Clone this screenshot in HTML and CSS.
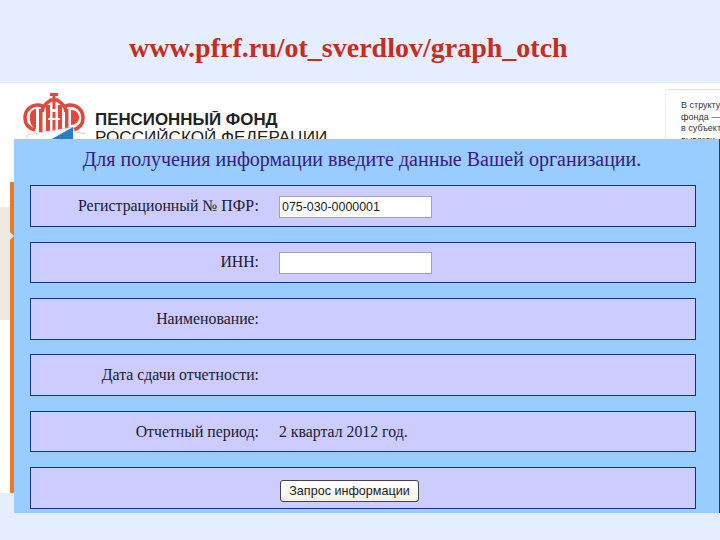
FILE: index.html
```html
<!DOCTYPE html>
<html lang="ru">
<head>
<meta charset="utf-8">
<title>www.pfrf.ru/ot_sverdlov/graph_otch</title>
<link rel="stylesheet" href="styles.css">
</head>
<body>
<header class="slide-title"><h1>www.pfrf.ru/ot_sverdlov/graph_otch</h1></header>
<section class="shot">
  <div class="site-head">
    <svg class="logo" viewBox="0 0 62 48" aria-hidden="true">
      <g fill="none" stroke="#e0483c" stroke-width="3.600">
        <path d="M12 38C5 36 2 31 2 26 2 18 8 13 15 13c3 0 5 1 6 3"/>
        <path d="M50 38c7-2 10-7 10-12 0-8-6-13-13-13-3 0-5 1-6 3"/>
        <path d="M19 20c0-7 6-10 9-12h6c3 2 9 5 9 12"/>
      </g>
      <g fill="#e0483c">
        <path d="M27 1h8v3h-2.500v5h-3V4H27z"/>
        <path d="M7 22c1-3 4-5 6-5v20c-3-1-7-5-6-15z"/>
        <rect x="16" y="17" width="3.500" height="23"/>
        <rect x="23" y="13" width="4" height="26"/>
        <rect x="29.500" y="9" width="3" height="30"/>
        <rect x="35" y="13" width="4" height="26"/>
        <rect x="42" y="17" width="3.500" height="21"/>
        <path d="M48 18c5 0 8 3 8 8 0 4-4 7-8 7z"/>
      </g>
      <path fill="#fff" d="M29 17h4v3h-4zM25 26h12v2H25z"/>
      <path fill="#fff" stroke="#b4c2d2" stroke-width=".7" d="M4 43l46-8 2 5 12 2v6H4z"/>
      <path fill="#2b7cc6" d="M27 48l23-13v13z"/>
    </svg>
    <div class="org"><span class="org-a">ПЕНСИОННЫЙ ФОНД</span><span class="org-b">РОССИЙСКОЙ ФЕДЕРАЦИИ</span></div>
    <div class="note">В структу<br>фонда —<br>в субъект<br>вывезти</div>
  </div>
  <div class="side-row">
    <div class="tab"></div>
    <div class="rule"></div>
  </div>
</section>
<main class="panel">
  <h2>Для получения информации введите данные Вашей организации.</h2>
  <div class="row"><span class="label">Регистрационный № ПФР:</span><input class="field" type="text" value="075-030-0000001"></div>
  <div class="row"><span class="label">ИНН:</span><input class="field" type="text"></div>
  <div class="row"><span class="label">Наименование:</span></div>
  <div class="row"><span class="label">Дата сдачи отчетности:</span></div>
  <div class="row"><span class="label">Отчетный период:</span><span class="value">2 квартал 2012 год.</span></div>
  <div class="row"><span class="label"></span><button class="submit" type="button">Запрос информации</button></div>
</main>
</body>
</html>
```
FILE: styles.css
```css
* { box-sizing: border-box; }
html, body { margin: 0; padding: 0; }
body {
  width: 720px;
  height: 540px;
  overflow: hidden;
  position: relative;
  background: #e4eefe;
  font-family: "Liberation Serif", serif;
}
.slide-title { height: 83px; padding-top: 31px; padding-left: 129px; }
.slide-title h1 {
  margin: 0;
  font-size: 28px;
  line-height: 34px;
  font-weight: 700;
  color: #c52d1c;
  white-space: nowrap;
}
.shot { height: 410px; background: #fff; display: flex; flex-direction: column; }
.site-head { height: 99px; display: flex; align-items: flex-start; padding-top: 9px; padding-left: 23px; position: relative; }
.logo { width: 62px; height: 48px; flex: none; }
.org {
  display: flex;
  flex-direction: column;
  margin-left: 10px;
  margin-top: 19px;
  font-family: "Liberation Sans", sans-serif;
  font-size: 17px;
  line-height: 18px;
  color: #222;
  height: 47px;
  overflow: hidden;
  white-space: nowrap;
}
.org-a { font-weight: 700; font-size: 16.900px; }
.org-b { font-size: 17.100px; }
.note {
  position: absolute;
  left: 665px;
  top: 6px;
  width: 55px;
  height: 50px;
  overflow: hidden;
  padding: 10px 0 0 15px;
  border-top: 1px solid #ddd;
  border-left: 1px solid #eee;
  border-top-left-radius: 5px;
  font-family: "Liberation Sans", sans-serif;
  font-size: 9px;
  line-height: 11.5px;
  color: #333;
  white-space: nowrap;
}
.side-row { flex: 1; display: flex; align-items: flex-start; position: relative; }
.tab { width: 10px; height: 113px; margin-top: 25px; background: #eee9e3; }
.rule { width: 4px; height: 311px; background: #ee7a1c; position: relative; }
.rule::after {
  content: "";
  position: absolute;
  left: 0;
  top: 50px;
  border-left: 4px solid #f6e6d6;
  border-top: 4px solid transparent;
  border-bottom: 4px solid transparent;
}
.panel {
  position: absolute;
  left: 14px;
  top: 139px;
  width: 706px;
  height: 374px;
  background: #99ccff;
  border-right: 1px solid #1b3f7e;
  padding: 0 23px 0 16px;
  display: flex;
  flex-direction: column;
}
.panel h2 {
  margin: 0;
  flex: none;
  height: 46.3px;
  padding-top: 8px;
  padding-right: 2px;
  font-size: 20px;
  line-height: 24px;
  font-weight: 400;
  color: #3a1a80;
  text-align: center;
  white-space: nowrap;
}
.row {
  height: 41.6px;
  margin-bottom: 14.8px;
  flex: none;
  background: #ccccff;
  border: 1px solid #0f3480;
  display: flex;
  align-items: center;
  font-size: 15.800px;
  color: #1a1a33;
}
.row:last-child { margin-bottom: 0; }
.label { width: 228px; flex: none; text-align: right; }
.value { margin-left: 20px; }
.field {
  margin-left: 20px;
  margin-top: 2px;
  width: 153px;
  height: 22px;
  padding: 0 2px;
  background: #fff;
  border: 1px solid #a3a3b0;
  border-radius: 0;
  font-family: "Liberation Sans", sans-serif;
  font-size: 12.4px;
  color: #222;
  outline: none;
}
.submit {
  margin-left: 21px;
  margin-top: 5px;
  width: 139px;
  height: 22px;
  padding: 0;
  background: linear-gradient(#ffffff, #f3f0e8);
  border: 1px solid #444;
  border-radius: 3px;
  font-family: "Liberation Sans", sans-serif;
  font-size: 12.6px;
  color: #222;
}
```
